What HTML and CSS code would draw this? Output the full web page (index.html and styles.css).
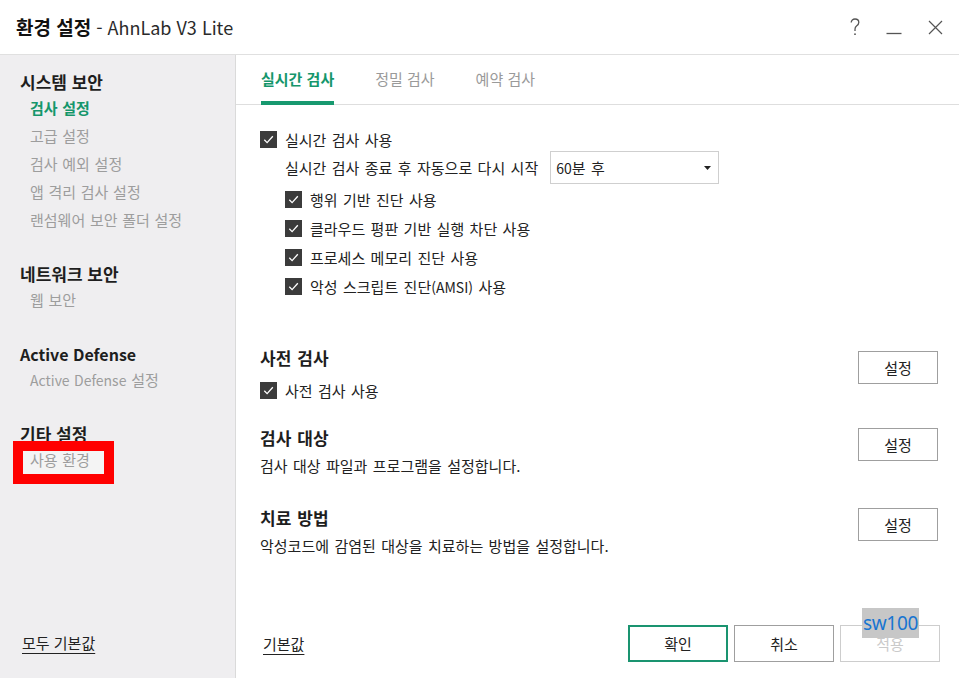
FILE: index.html
```html
<!DOCTYPE html>
<html lang="ko">
<head>
<meta charset="utf-8">
<title>환경 설정 - AhnLab V3 Lite</title>
<link rel="stylesheet" href="styles.css">
</head>
<body>
<header class="titlebar">
  <div class="title"><b>환경 설정</b><span class="app"> - AhnLab V3 Lite</span></div>
  <div class="win-ctrls">
    <svg class="ctrl" width="10" height="18" viewBox="0 0 10 18"><path d="M1.2 4.6C1.2 2.4 2.9 1 5 1c2.2 0 3.8 1.4 3.8 3.5 0 1.8-1.1 2.7-2.3 3.5C5.4 8.8 5 9.6 5 11.3V13" fill="none" stroke="#555" stroke-width="1.3"/><circle cx="5" cy="16.2" r="0.9" fill="#555"/></svg>
    <svg class="ctrl" width="16" height="18" viewBox="0 0 16 18"><path d="M0.5 15.5H15.5" stroke="#555" stroke-width="1.3"/></svg>
    <svg class="ctrl" width="15" height="15" viewBox="0 0 15 15"><path d="M1 1L14 14M14 1L1 14" stroke="#555" stroke-width="1.2"/></svg>
  </div>
</header>
<div class="window">
  <aside class="sidebar">
    <nav class="nav">
      <div class="group">
        <div class="group-title">시스템 보안</div>
        <ul class="items">
          <li class="item active">검사 설정</li>
          <li class="item">고급 설정</li>
          <li class="item">검사 예외 설정</li>
          <li class="item">앱 격리 검사 설정</li>
          <li class="item">랜섬웨어 보안 폴더 설정</li>
        </ul>
      </div>
      <div class="group">
        <div class="group-title">네트워크 보안</div>
        <ul class="items">
          <li class="item">웹 보안</li>
        </ul>
      </div>
      <div class="group">
        <div class="group-title"><span class="lat-h">Active Defense</span></div>
        <ul class="items">
          <li class="item"><span class="lat">Active Defense</span> 설정</li>
        </ul>
      </div>
      <div class="group">
        <div class="group-title">기타 설정</div>
        <ul class="items">
          <li class="item flagged"><span class="flag">사용 환경</span></li>
        </ul>
      </div>
    </nav>
    <div class="sidebar-foot"><a class="link">모두 기본값</a></div>
  </aside>
  <main class="main">
    <div class="tabs">
      <div class="tab active">실시간 검사</div>
      <div class="tab">정밀 검사</div>
      <div class="tab">예약 검사</div>
    </div>
    <div class="content">
      <div class="check-row main-row">
        <svg class="cb" width="17" height="17" viewBox="0 0 17 17"><rect width="17" height="17" fill="#3b3b3b"/><path d="M4.3 8.8L7.1 11.6L12.8 5.2" fill="none" stroke="#fff" stroke-width="1.3"/></svg>
        <span>실시간 검사 사용</span>
      </div>
      <div class="restart-row">
        <span>실시간 검사 종료 후 자동으로 다시 시작</span>
        <div class="select"><span><span class="lat">60</span>분 후</span><svg class="arrow" width="7" height="4" viewBox="0 0 7 4"><path d="M0 0H7L3.5 4Z" fill="#222"/></svg></div>
      </div>
      <div class="sub">
        <div class="check-row sub-row">
          <svg class="cb" width="17" height="17" viewBox="0 0 17 17"><rect width="17" height="17" fill="#3b3b3b"/><path d="M4.3 8.8L7.1 11.6L12.8 5.2" fill="none" stroke="#fff" stroke-width="1.3"/></svg>
          <span>행위 기반 진단 사용</span>
        </div>
        <div class="check-row sub-row">
          <svg class="cb" width="17" height="17" viewBox="0 0 17 17"><rect width="17" height="17" fill="#3b3b3b"/><path d="M4.3 8.8L7.1 11.6L12.8 5.2" fill="none" stroke="#fff" stroke-width="1.3"/></svg>
          <span>클라우드 평판 기반 실행 차단 사용</span>
        </div>
        <div class="check-row sub-row">
          <svg class="cb" width="17" height="17" viewBox="0 0 17 17"><rect width="17" height="17" fill="#3b3b3b"/><path d="M4.3 8.8L7.1 11.6L12.8 5.2" fill="none" stroke="#fff" stroke-width="1.3"/></svg>
          <span>프로세스 메모리 진단 사용</span>
        </div>
        <div class="check-row sub-row">
          <svg class="cb" width="17" height="17" viewBox="0 0 17 17"><rect width="17" height="17" fill="#3b3b3b"/><path d="M4.3 8.8L7.1 11.6L12.8 5.2" fill="none" stroke="#fff" stroke-width="1.3"/></svg>
          <span>악성 스크립트 진단<span class="lat">(AMSI)</span> 사용</span>
        </div>
      </div>

      <section class="sect sect-first">
        <div class="sect-info">
          <h2 class="sect-title">사전 검사</h2>
          <div class="check-row sect-check">
            <svg class="cb" width="17" height="17" viewBox="0 0 17 17"><rect width="17" height="17" fill="#3b3b3b"/><path d="M4.3 8.8L7.1 11.6L12.8 5.2" fill="none" stroke="#fff" stroke-width="1.3"/></svg>
            <span>사전 검사 사용</span>
          </div>
        </div>
        <button class="btn btn-set btn-set-first">설정</button>
      </section>
      <section class="sect sect-second">
        <div class="sect-info">
          <h2 class="sect-title">검사 대상</h2>
          <p class="desc">검사 대상 파일과 프로그램을 설정합니다.</p>
        </div>
        <button class="btn btn-set">설정</button>
      </section>
      <section class="sect sect-third">
        <div class="sect-info">
          <h2 class="sect-title">치료 방법</h2>
          <p class="desc">악성코드에 감염된 대상을 치료하는 방법을 설정합니다.</p>
        </div>
        <button class="btn btn-set">설정</button>
      </section>
    </div>
    <footer class="footer">
      <a class="link">기본값</a>
      <div class="actions">
        <button class="btn btn-act primary">확인</button>
        <button class="btn btn-act">취소</button>
        <div class="apply-wrap">
          <button class="btn btn-act disabled">적용</button>
          <span class="watermark">sw100</span>
        </div>
      </div>
    </footer>
  </main>
</div>
</body>
</html>
```
FILE: styles.css
```css
* { box-sizing: border-box; }
html, body { margin: 0; padding: 0; }
body {
  width: 959px;
  height: 678px;
  overflow: hidden;
  background: #fff;
  color: #222;
  font-family: "Noto Sans CJK KR", "Noto Sans", sans-serif;
  font-size: 15px;
  display: flex;
  flex-direction: column;
}
.lat { font-size: 14px; }
.lat-h { font-size: 16px; }

/* Title bar */
.titlebar {
  height: 55px;
  flex: none;
  border-bottom: 1px solid #e0e0e0;
  display: flex;
  align-items: center;
  padding: 0 16px 0 16px;
}
.title { font-size: 19px; line-height: 24px; color: #111; }
.title b { font-weight: 700; }
.title .app { font-size: 18px; font-weight: 400; color: #2a2a2a; }
.win-ctrls {
  margin-left: auto;
  display: flex;
  align-items: center;
  gap: 26px;
}
.ctrl { display: block; }

/* Layout */
.window { flex: 1; display: flex; min-height: 0; }

/* Sidebar */
.sidebar {
  width: 236px;
  flex: none;
  background: #efeef0;
  border-right: 1px solid #dadada;
  display: flex;
  flex-direction: column;
  padding: 15px 0 25px 0;
}
.nav { display: flex; flex-direction: column; }
.group { margin-bottom: 28px; }
.group-title {
  padding-left: 20px;
  font-size: 17px;
  font-weight: 700;
  line-height: 24px;
  color: #1e1e1e;
}
.items { list-style: none; margin: 0; padding: 0; }
.item {
  padding-left: 30px;
  font-size: 15px;
  line-height: 28px;
  color: #9d9d9d;
  word-spacing: 0.5px;
}
.item.active { color: #15966b; font-weight: 700; }
.item.flagged { padding-left: 23px; height: 28px; padding-top: 5px; }
.flag {
  display: block;
  width: 81px;
  height: 23px;
  line-height: 18px;
  padding-left: 7px;
  background: #f4f4f4;
  outline: 10px solid #ff0000;
}
.sidebar-foot { margin-top: auto; padding-left: 22px; }
.link {
  font-size: 15px;
  line-height: 20px;
  color: #222;
  text-decoration: underline;
  text-underline-offset: 4px;
  text-decoration-thickness: 1px;
}

/* Main */
.main { flex: 1; display: flex; flex-direction: column; min-width: 0; }
.tabs {
  height: 50px;
  flex: none;
  display: flex;
  gap: 41px;
  padding-left: 25px;
  border-bottom: 1px solid #dedede;
}
.tab {
  height: 50px;
  padding-top: 12px;
  line-height: 24px;
  font-size: 15px;
  color: #9a9a9a;
  border-bottom: 4px solid transparent;
}
.tab.active { color: #15966b; font-weight: 700; border-bottom-color: #17996f; }

.content { padding: 20px 21px 0 24px; word-spacing: 1.2px; }
.check-row { display: flex; align-items: center; gap: 8px; }
.cb { display: block; flex: none; }
.main-row { height: 28px; }
.restart-row {
  height: 33px;
  margin-top: -2px;
  padding-left: 25px;
  display: flex;
  align-items: center;
  gap: 12px;
}
.select {
  width: 169px;
  height: 33px;
  border: 1px solid #cfcfcf;
  display: flex;
  align-items: center;
  padding: 0 7px 0 5px;
  background: #fff;
}
.arrow { margin-left: auto; display: block; }
.sub { padding-left: 25px; margin-top: 1px; }
.sub-row { height: 29px; }

.sect { display: flex; justify-content: space-between; align-items: flex-start; }
.sect-first { margin-top: 45px; }
.sect-second { margin-top: 24px; }
.sect-third { margin-top: 28px; }
.sect-title {
  margin: 0;
  font-size: 17px;
  font-weight: 700;
  line-height: 24px;
  color: #1e1e1e;
}
.sect-check { margin-top: 8px; height: 24px; }
.desc { margin: 4px 0 0; line-height: 24px; }

.btn {
  font-family: inherit;
  font-size: 15px;
  background: #fff;
  color: #222;
  border: 1px solid #9f9f9f;
  padding: 0;
  cursor: default;
}
.btn-set { width: 80px; height: 33px; margin-top: 2px; }
.btn-set-first { margin-top: 5px; }

/* Footer */
.footer {
  margin-top: auto;
  display: flex;
  align-items: center;
  padding: 0 19px 16px 27px;
}
.actions { margin-left: auto; display: flex; gap: 6px; }
.btn-act { width: 100px; height: 37px; }
.btn-act.primary { border: 2px solid #1a9470; }
.btn-act.disabled { border-color: #cdcdcd; color: #cacaca; }
.apply-wrap { position: relative; }
.watermark {
  position: absolute;
  left: 22px;
  top: -17px;
  width: 57px;
  height: 30px;
  background: #c7c7c7;
  color: #1875d1;
  font-family: "Noto Sans", sans-serif;
  font-size: 19px;
  line-height: 30px;
  text-align: center;
  letter-spacing: -0.3px;
}
```
